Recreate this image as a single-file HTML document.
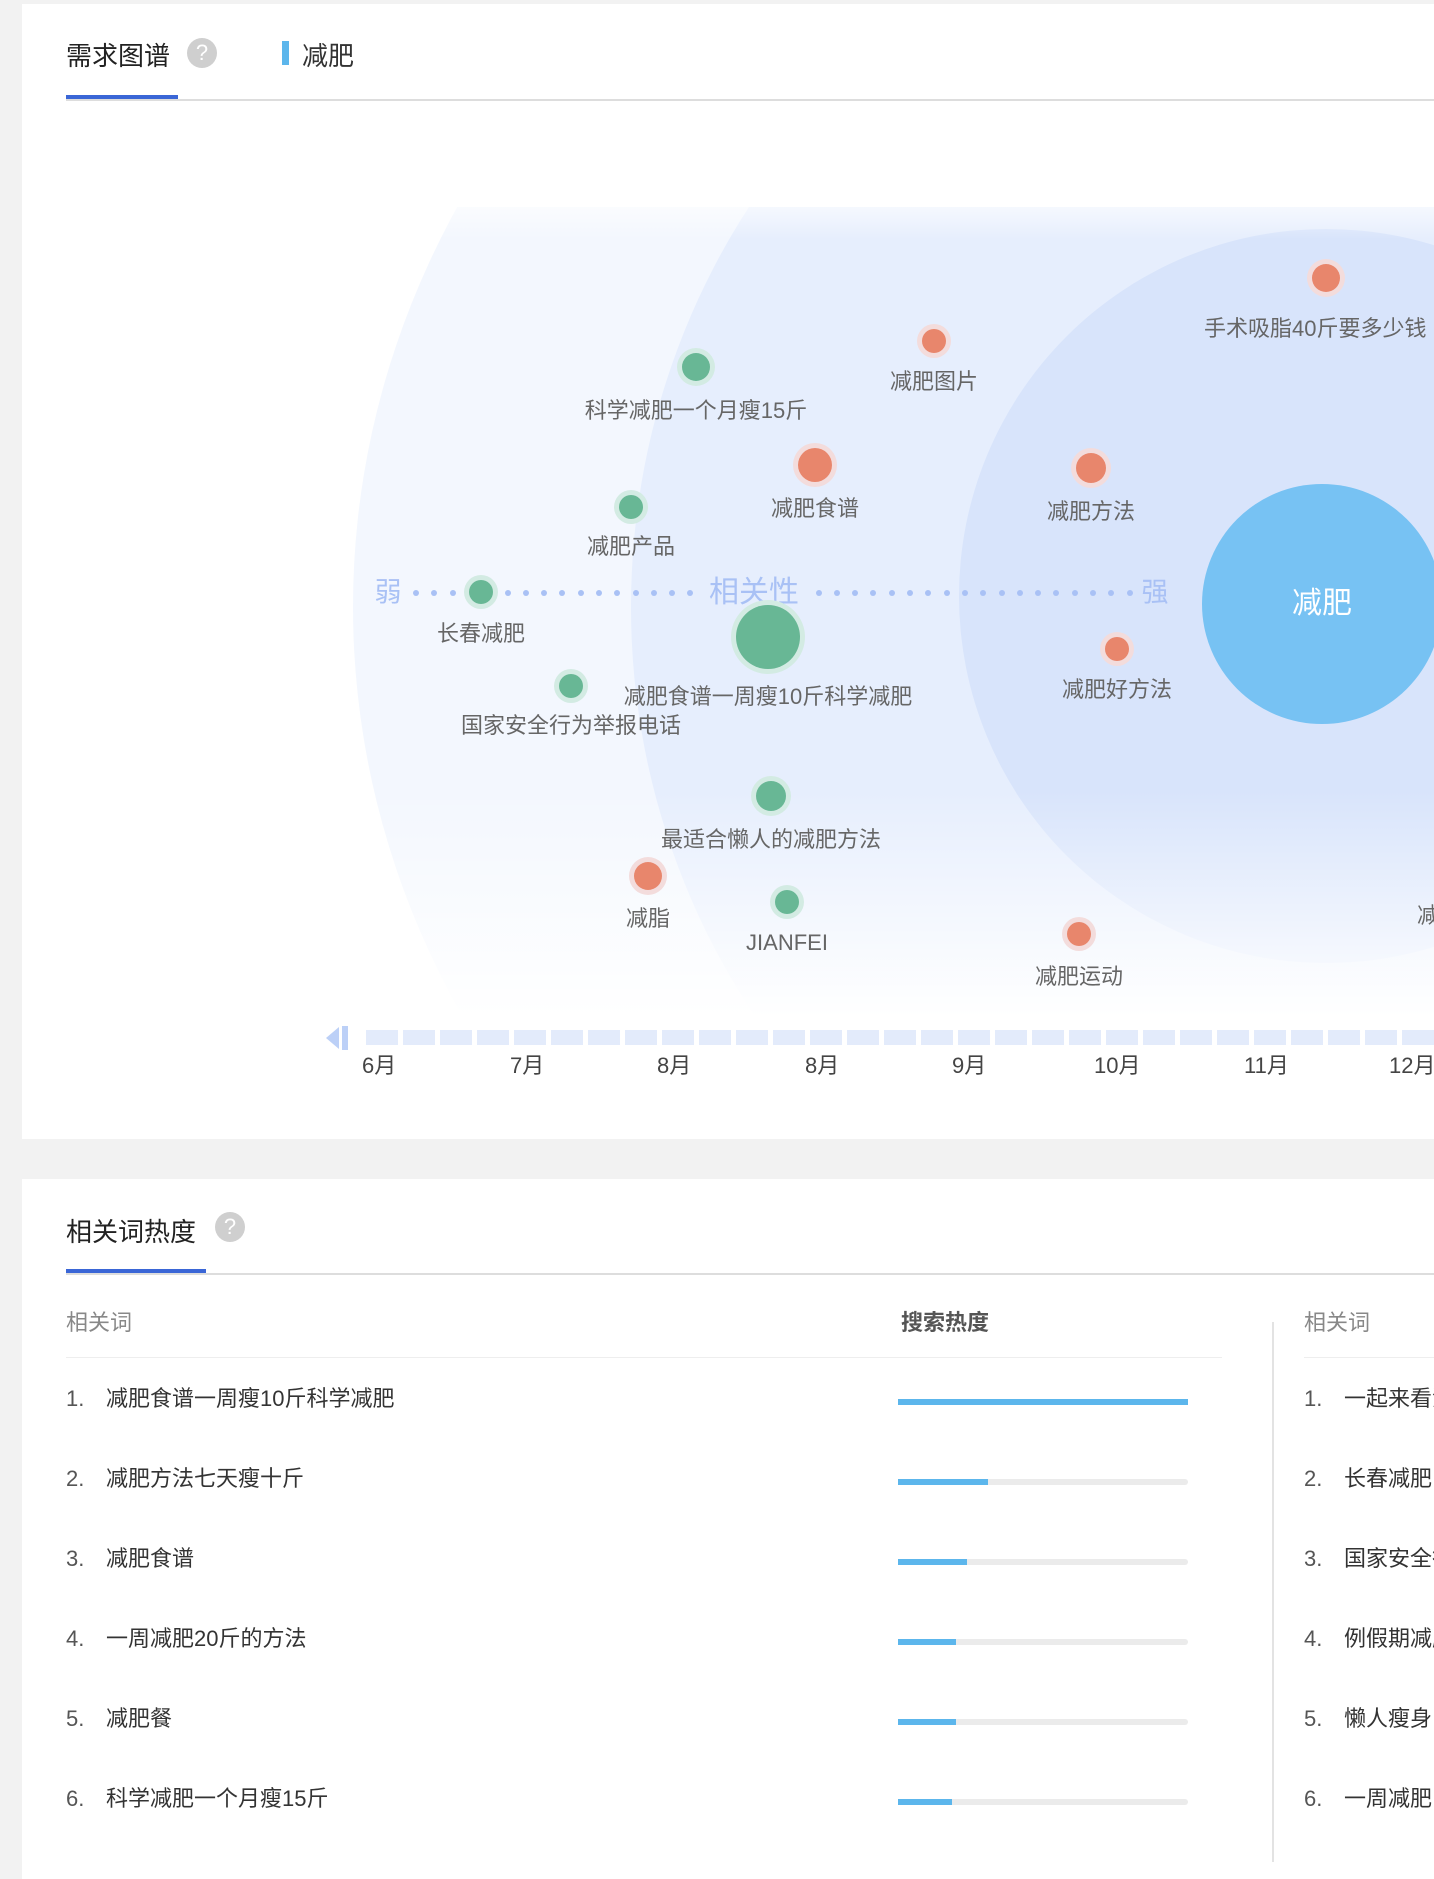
<!DOCTYPE html>
<html><head><meta charset="utf-8"><style>
*{margin:0;padding:0;box-sizing:border-box}
html,body{width:1434px;height:1856px;overflow:hidden;background:#f2f2f2;font-family:"Liberation Sans","Noto Sans CJK SC",sans-serif}
.a{position:absolute;white-space:nowrap}
.lbl{position:absolute;white-space:nowrap;font-size:22px;color:#666;transform:translate(-50%,-50%);line-height:1}
.n{position:absolute;border-radius:50%;transform:translate(-50%,-50%)}
.g{background:#68b795;box-shadow:0 0 0 5px #d3ebe3}
.o{background:#e8866c;box-shadow:0 0 0 5px #f3dcdc}
.help{position:absolute;width:30px;height:30px;border-radius:50%;background:#cfcfcf;color:#fff;font-size:22px;text-align:center;line-height:30px}
.dot{position:absolute;width:6px;height:6px;border-radius:50%;background:#a9c1f5;top:590px}
.sq{position:absolute;top:1030px;width:32px;height:15px;background:#e3ebfb}
.ml{position:absolute;top:1048px;font-size:22px;color:#444;white-space:nowrap}
.row{position:absolute;font-size:22px;color:#333;line-height:1;white-space:nowrap}
.bar{position:absolute;left:898px;width:290px;height:6px;background:#ebebeb;border-radius:3px}
.bar i{display:block;height:6px;background:#5cb6ec}
</style></head><body>
<div style="position:absolute;left:22px;top:4px;width:1412px;height:1135px;overflow:hidden;background:#fff">
  <div style="position:absolute;left:0;top:203px;width:1412px;height:810px;overflow:hidden">
    <div style="position:absolute;left:331px;top:-500px;width:2000px;height:1800px;border-radius:50%;background:#f3f7fe"></div>
    <div style="position:absolute;left:609px;top:-320px;width:1400px;height:1440px;border-radius:50%;background:#e6eefd"></div>
    <div style="position:absolute;left:937px;top:22px;width:734px;height:734px;border-radius:50%;background:#d8e4fb"></div>
    <div style="position:absolute;left:0;top:0;width:1412px;height:810px;background:linear-gradient(rgba(255,255,255,0.6) 0,rgba(255,255,255,0) 4%,rgba(255,255,255,0) 72%,#fff 100%)"></div>
  </div>
</div>
<div class="a" style="left:66px;top:36px;font-size:26px;color:#222">需求图谱</div>
<div class="help" style="left:187px;top:38px">?</div>
<div class="a" style="left:282px;top:41px;width:7px;height:24px;background:#5cb6ec"></div>
<div class="a" style="left:302px;top:36px;font-size:26px;color:#333">减肥</div>
<div class="a" style="left:66px;top:99px;width:1400px;height:2px;background:#ddd"></div>
<div class="a" style="left:66px;top:95px;width:112px;height:4px;background:#3a66d6"></div>

<div class="n" style="left:1322px;top:604px;width:240px;height:240px;background:#77c2f3"></div>
<div class="lbl" style="left:1322px;top:604px;color:#fff;font-size:30px">减肥</div>

<div class="lbl" style="left:388px;top:593px;color:#a9c1f5;font-size:27px">弱</div>
<div class="lbl" style="left:754px;top:593px;color:#a9c1f5;font-size:30px">相关性</div>
<div class="lbl" style="left:1155px;top:593px;color:#a9c1f5;font-size:27px">强</div>
<div id="dots"></div>

<div class="n g" style="left:696px;top:367px;width:28px;height:28px"></div>
<div class="lbl" style="left:696px;top:411px">科学减肥一个月瘦15斤</div>
<div class="n o" style="left:934px;top:341px;width:24px;height:24px"></div>
<div class="lbl" style="left:934px;top:382px">减肥图片</div>
<div class="n o" style="left:1326px;top:278px;width:28px;height:28px"></div>
<div class="a" style="left:1204px;top:311px;font-size:22px;color:#666">手术吸脂40斤要多少钱</div>
<div class="n o" style="left:815px;top:465px;width:34px;height:34px"></div>
<div class="lbl" style="left:815px;top:509px">减肥食谱</div>
<div class="n o" style="left:1091px;top:468px;width:30px;height:30px"></div>
<div class="lbl" style="left:1091px;top:512px">减肥方法</div>
<div class="n g" style="left:631px;top:507px;width:24px;height:24px"></div>
<div class="lbl" style="left:631px;top:547px">减肥产品</div>
<div class="n g" style="left:481px;top:592px;width:24px;height:24px"></div>
<div class="lbl" style="left:481px;top:634px">长春减肥</div>
<div class="n g" style="left:768px;top:637px;width:64px;height:64px"></div>
<div class="lbl" style="left:768px;top:697px">减肥食谱一周瘦10斤科学减肥</div>
<div class="n g" style="left:571px;top:686px;width:24px;height:24px"></div>
<div class="lbl" style="left:571px;top:726px">国家安全行为举报电话</div>
<div class="n o" style="left:1117px;top:649px;width:24px;height:24px"></div>
<div class="lbl" style="left:1117px;top:690px">减肥好方法</div>
<div class="n g" style="left:771px;top:796px;width:30px;height:30px"></div>
<div class="lbl" style="left:771px;top:840px">最适合懒人的减肥方法</div>
<div class="n o" style="left:648px;top:876px;width:28px;height:28px"></div>
<div class="lbl" style="left:648px;top:919px">减脂</div>
<div class="n g" style="left:787px;top:902px;width:24px;height:24px"></div>
<div class="lbl" style="left:787px;top:943px">JIANFEI</div>
<div class="n o" style="left:1079px;top:934px;width:24px;height:24px"></div>
<div class="lbl" style="left:1079px;top:977px">减肥运动</div>
<div class="a" style="left:1417px;top:898px;font-size:22px;color:#666">减肥</div>

<svg class="a" style="left:326px;top:1024px" width="28" height="28"><polygon points="0,14 13,3 13,25" fill="#bcd0f7"/><rect x="16" y="2" width="6" height="24" fill="#bcd0f7"/></svg>
<div id="sqs"></div>
<div class="ml" style="left:362px">6月</div>
<div class="ml" style="left:510px">7月</div>
<div class="ml" style="left:657px">8月</div>
<div class="ml" style="left:805px">8月</div>
<div class="ml" style="left:952px">9月</div>
<div class="ml" style="left:1094px">10月</div>
<div class="ml" style="left:1244px">11月</div>
<div class="ml" style="left:1389px">12月</div>

<div class="a" style="left:22px;top:1179px;width:1412px;height:700px;background:#fff"></div>
<div class="a" style="left:66px;top:1212px;font-size:26px;color:#222">相关词热度</div>
<div class="help" style="left:215px;top:1212px">?</div>
<div class="a" style="left:66px;top:1273px;width:1400px;height:2px;background:#ddd"></div>
<div class="a" style="left:66px;top:1269px;width:140px;height:4px;background:#3a66d6"></div>
<div class="a" style="left:66px;top:1305px;font-size:22px;color:#888">相关词</div>
<div class="a" style="left:901px;top:1305px;font-size:22px;color:#555;font-weight:bold">搜索热度</div>
<div class="a" style="left:66px;top:1357px;width:1156px;height:1px;background:#eee"></div>
<div class="a" style="left:1272px;top:1322px;width:2px;height:540px;background:#e3e3e3"></div>
<div class="a" style="left:1304px;top:1305px;font-size:22px;color:#888">相关词</div>
<div class="a" style="left:1304px;top:1357px;width:200px;height:1px;background:#eee"></div>

<div class="row" style="left:66px;top:1388px;color:#555">1.</div><div class="row" style="left:106px;top:1388px">减肥食谱一周瘦10斤科学减肥</div>
<div class="bar" style="top:1399px"><i style="width:290px"></i></div>
<div class="row" style="left:66px;top:1468px;color:#555">2.</div><div class="row" style="left:106px;top:1468px">减肥方法七天瘦十斤</div>
<div class="bar" style="top:1479px"><i style="width:90px"></i></div>
<div class="row" style="left:66px;top:1548px;color:#555">3.</div><div class="row" style="left:106px;top:1548px">减肥食谱</div>
<div class="bar" style="top:1559px"><i style="width:69px"></i></div>
<div class="row" style="left:66px;top:1628px;color:#555">4.</div><div class="row" style="left:106px;top:1628px">一周减肥20斤的方法</div>
<div class="bar" style="top:1639px"><i style="width:58px"></i></div>
<div class="row" style="left:66px;top:1708px;color:#555">5.</div><div class="row" style="left:106px;top:1708px">减肥餐</div>
<div class="bar" style="top:1719px"><i style="width:58px"></i></div>
<div class="row" style="left:66px;top:1788px;color:#555">6.</div><div class="row" style="left:106px;top:1788px">科学减肥一个月瘦15斤</div>
<div class="bar" style="top:1799px"><i style="width:54px"></i></div>

<div class="row" style="left:1304px;top:1388px;color:#555">1.</div><div class="row" style="left:1344px;top:1388px">一起来看流星雨</div>
<div class="row" style="left:1304px;top:1468px;color:#555">2.</div><div class="row" style="left:1344px;top:1468px">长春减肥</div>
<div class="row" style="left:1304px;top:1548px;color:#555">3.</div><div class="row" style="left:1344px;top:1548px">国家安全行为举报电话</div>
<div class="row" style="left:1304px;top:1628px;color:#555">4.</div><div class="row" style="left:1344px;top:1628px">例假期减肥</div>
<div class="row" style="left:1304px;top:1708px;color:#555">5.</div><div class="row" style="left:1344px;top:1708px">懒人瘦身</div>
<div class="row" style="left:1304px;top:1788px;color:#555">6.</div><div class="row" style="left:1344px;top:1788px">一周减肥</div>

<script>
var d=document.getElementById('dots'),h='';
for(var x=413;x<1140;x+=18.3){if((x>466&&x<494)||(x>700&&x<805))continue;h+='<div class="dot" style="left:'+x.toFixed(0)+'px"></div>';}
d.innerHTML=h;
var s=document.getElementById('sqs'),k='';
for(var i=0;i<30;i++){k+='<div class="sq" style="left:'+(366+i*37)+'px"></div>';}
s.innerHTML=k;
</script>
</body></html>
